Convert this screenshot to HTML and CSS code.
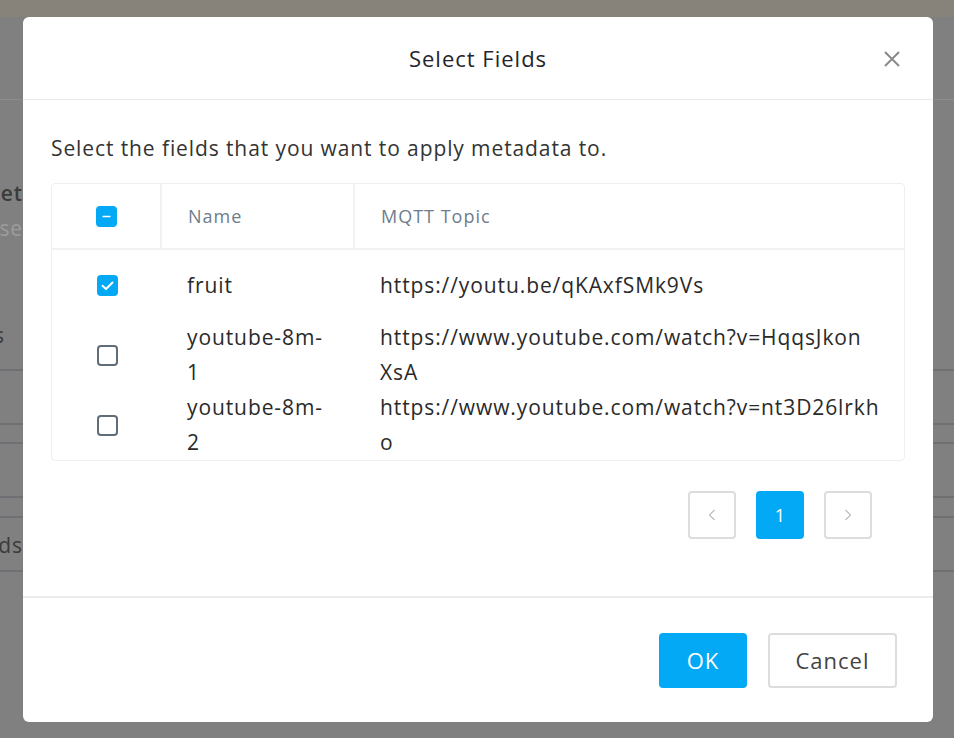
FILE: index.html
```html
<!DOCTYPE html>
<html lang="en">
<head>
<meta charset="utf-8">
<title>Select Fields</title>
<link rel="stylesheet" href="styles.css">
</head>
<body>
<div class="page">
  <div class="topband"></div>
  <div class="pagehead"></div>
  <div class="pagebody">
    <div class="bgtext bgtext-title"><span>Dataset</span></div>
    <div class="bgtext bgtext-sub"><span>Choose</span></div>
    <div class="bgtext bgtext-label"><span>Fields</span></div>
    <div class="bgline bgline-1"></div>
    <div class="bgline bgline-2"></div>
    <div class="bgline bgline-3"></div>
    <div class="bgline bgline-4"></div>
    <div class="bgline bgline-5"></div>
    <div class="bgtext bgtext-row"><span>Fields</span></div>
    <div class="bgline bgline-6"></div>
  </div>
</div>

<div class="modal" role="dialog" aria-labelledby="modal-title">
  <div class="modal-header">
    <h2 id="modal-title" class="modal-title">Select Fields</h2>
    <button class="close-btn" aria-label="Close">
      <svg width="18" height="18" viewBox="0 0 18 18"><path d="M2 2L16 16M16 2L2 16" stroke="#8a8a8a" stroke-width="2" fill="none"/></svg>
    </button>
  </div>
  <div class="modal-body">
    <p class="desc">Select the fields that you want to apply metadata to.</p>
    <div class="table">
      <div class="thead">
        <div class="th th-check">
          <span class="cb cb-on">
            <svg width="21" height="21" viewBox="0 0 21 21"><rect x="0" y="0" width="21" height="21" rx="4" fill="#03a9f4"/><path d="M6.5 10.5H14.5" stroke="#fff" stroke-width="1.6"/></svg>
          </span>
        </div>
        <div class="th th-name">Name</div>
        <div class="th th-topic">MQTT Topic</div>
      </div>
      <div class="tbody">
        <div class="tr">
          <div class="td td-check">
            <span class="cb cb-on">
              <svg width="21" height="21" viewBox="0 0 21 21"><rect x="0" y="0" width="21" height="21" rx="4" fill="#03a9f4"/><path d="M5.5 10.8L9 14L15.5 7.5" stroke="#fff" stroke-width="2" fill="none" stroke-linecap="round" stroke-linejoin="round"/></svg>
            </span>
          </div>
          <div class="td td-name">fruit</div>
          <div class="td td-topic">https://youtu.be/qKAxfSMk9Vs</div>
        </div>
        <div class="tr">
          <div class="td td-check"><span class="cb cb-off"></span></div>
          <div class="td td-name">youtube-8m-1</div>
          <div class="td td-topic">https://www.youtube.com/watch?v=HqqsJkon<wbr>XsA</div>
        </div>
        <div class="tr">
          <div class="td td-check"><span class="cb cb-off"></span></div>
          <div class="td td-name">youtube-8m-2</div>
          <div class="td td-topic">https://www.youtube.com/watch?v=nt3D26lrkh<wbr>o</div>
        </div>
      </div>
    </div>
    <div class="pager">
      <button class="pg pg-nav" aria-label="Previous page">
        <svg width="8" height="12" viewBox="0 0 8 12"><path d="M6.5 1L1.5 6L6.5 11" stroke="#bdbdbd" stroke-width="1.2" fill="none"/></svg>
      </button>
      <button class="pg pg-active">1</button>
      <button class="pg pg-nav" aria-label="Next page">
        <svg width="8" height="12" viewBox="0 0 8 12"><path d="M1.5 1L6.5 6L1.5 11" stroke="#bdbdbd" stroke-width="1.2" fill="none"/></svg>
      </button>
    </div>
  </div>
  <div class="modal-footer">
    <button class="btn btn-primary">OK</button>
    <button class="btn btn-default">Cancel</button>
  </div>
</div>
</body>
</html>
```
FILE: styles.css
```css
* { box-sizing: border-box; }
html, body { margin: 0; padding: 0; }
body {
  width: 954px;
  height: 738px;
  overflow: hidden;
  background: #808080;
  font-family: "Open Sans", "Liberation Sans", sans-serif;
  position: relative;
}
.page { display: flex; flex-direction: column; }
.topband { height: 17px; background: #87837b; }
.pagehead { height: 83px; border-bottom: 1px solid #8c8c8c; }
.pagebody { display: flex; flex-direction: column; }
.bgtext {
  width: 23px;
  display: flex;
  justify-content: flex-end;
  white-space: nowrap;
  font-size: 21px;
  letter-spacing: 0.9px;
  line-height: 30px;
}
.bgtext-title { margin-top: 78px; color: #3b3b3b; font-weight: 600; }
.bgtext-sub { margin-top: 5px; color: #9c9c9c; }
.bgtext-label { margin-top: 77px; color: #3b3b3b; width: 5px; }
.bgline { height: 2px; background: #6f7073; }
.bgline-1 { margin-top: 19px; }
.bgline-2 { margin-top: 52px; }
.bgline-3 { margin-top: 17px; }
.bgline-4 { margin-top: 52px; }
.bgline-5 { margin-top: 18px; }
.bgtext-row { margin-top: 12px; color: #3b3b3b; }
.bgline-6 { margin-top: 10px; }

.modal {
  position: absolute;
  top: 17px;
  left: 23px;
  width: 910px;
  height: 705px;
  background: #fff;
  border-radius: 6px;
  display: flex;
  flex-direction: column;
  overflow: hidden;
}
.modal-header {
  height: 83px;
  border-bottom: 1px solid #e8e8e8;
  display: flex;
  align-items: center;
  justify-content: center;
  position: relative;
}
.modal-title {
  margin: 0;
  font-size: 22px;
  letter-spacing: 1px;
  font-weight: 400;
  color: #24242c;
}
.close-btn {
  position: absolute;
  right: 32px;
  top: 33px;
  width: 18px;
  height: 18px;
  padding: 0;
  border: 0;
  background: none;
  display: flex;
}
.modal-body {
  padding: 0 28px;
  flex: 1;
}
.desc {
  margin: 33px 0 0;
  font-size: 21px;
  letter-spacing: 0.9px;
  line-height: 30px;
  color: #333;
}
.table {
  margin-top: 20px;
  border: 1px solid #efefef;
  border-radius: 4px;
}
.thead {
  display: grid;
  grid-template-columns: 110px 193px 1fr;
  height: 66px;
  border-bottom: 2px solid #f2f2f2;
}
.th {
  display: flex;
  align-items: center;
  font-size: 18px;
  letter-spacing: 1px;
  color: #6d7d8c;
  padding-left: 26px;
}
.th-check { justify-content: center; padding-left: 0; border-right: 2px solid #f2f2f2; }
.th-name { border-right: 2px solid #f2f2f2; }
.tbody { height: 210px; overflow: hidden; }
.tr {
  display: grid;
  grid-template-columns: 110px 193px 1fr;
  height: 70px;
}
.td {
  display: flex;
  align-items: center;
  font-size: 21px;
  letter-spacing: 0.9px;
  line-height: 35px;
  color: #2a2a2a;
  padding: 0 26px 0 25px;
}
.td-topic { padding-right: 18px; }
.td-check { justify-content: center; padding: 0; }
.cb { width: 21px; height: 21px; display: block; }
.cb svg { display: block; }
.cb-off { border: 2px solid #5f6c79; border-radius: 4px; background: #fff; }

.pager {
  display: flex;
  justify-content: flex-end;
  gap: 20px;
  margin-top: 30px;
  padding-right: 33px;
}
.pg {
  width: 48px;
  height: 48px;
  border: 2px solid #dddddd;
  border-radius: 4px;
  background: #fff;
  display: flex;
  align-items: center;
  justify-content: center;
  padding: 0;
  font-family: inherit;
}
.pg-active {
  background: #03a9f4;
  border-color: #03a9f4;
  color: #fff;
  font-size: 18px;
}
.modal-footer {
  border-top: 2px solid #ececec;
  height: 126px;
  display: flex;
  justify-content: flex-end;
  align-items: center;
  gap: 21px;
  padding-right: 36px;
}
.btn {
  height: 55px;
  border-radius: 4px;
  font-family: inherit;
  font-size: 22px;
  letter-spacing: 1px;
  padding: 0;
}
.btn-primary {
  width: 88px;
  background: #03a9f4;
  border: 0;
  color: #fff;
}
.btn-default {
  width: 129px;
  background: #fff;
  border: 2px solid #dddddd;
  color: #444;
}
```
